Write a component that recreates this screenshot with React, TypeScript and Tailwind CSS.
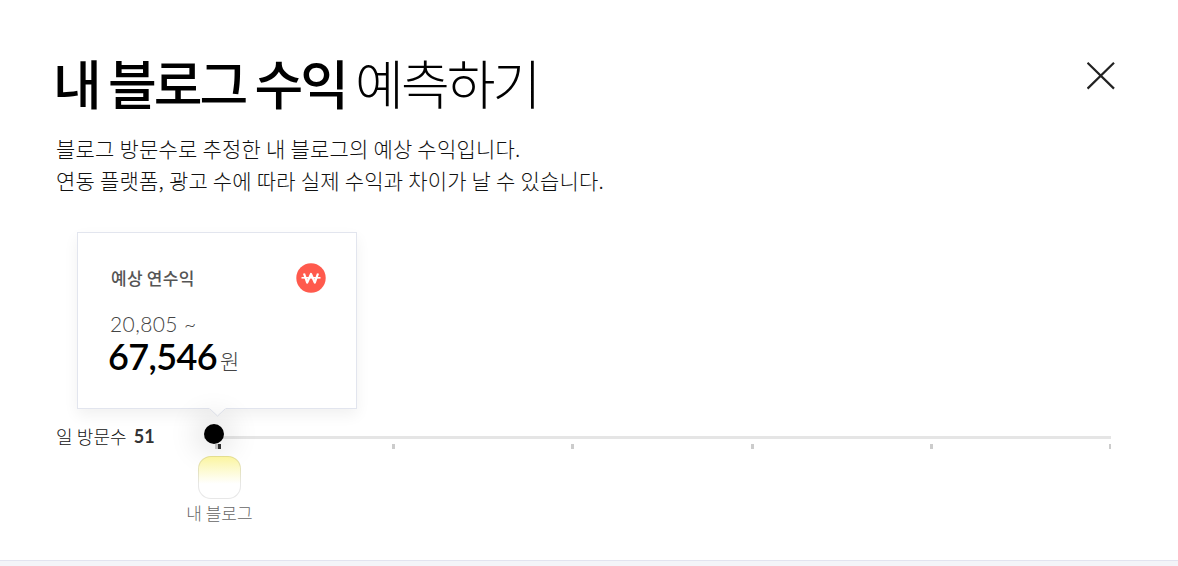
const ticks = [0, 1, 2, 3, 4, 5];

function CloseIcon() {
  return (
    <svg width="28" height="28" viewBox="0 0 28 28" fill="none" stroke="#222222" strokeWidth="2.2">
      <path d="M0.5 0.8L27 26.6M27 0.8L0.5 26.6" />
    </svg>
  );
}

function WonIcon() {
  return (
    <svg width="30" height="30" viewBox="0 0 30 30" fill="none">
      <circle cx="15" cy="15" r="14.7" fill="#FF5A4D" />
      <path
        d="M8 10.5L11.2 19.6L15 11L18.8 19.6L22 10.5"
        stroke="#FFFFFF"
        strokeWidth="2.2"
        strokeLinejoin="round"
      />
      <path d="M5.5 14.8H24.5" stroke="#FFFFFF" strokeWidth="1.6" />
    </svg>
  );
}

function RevenueCard() {
  return (
    <div className="relative h-[177px] w-[280px] border border-[#e2e5ee] bg-white pl-[33px] pr-[30px] pt-[30px] shadow-[0_6px_14px_rgba(0,0,0,0.06)]">
      <div className="flex h-[30px] items-center justify-between">
        <span className="text-[17px] font-medium tracking-[0.25px] text-[#555555]">예상 연수익</span>
        <WonIcon />
      </div>
      <div className="-ml-px mt-[18px] font-['Lato','Noto_Sans_CJK_KR',sans-serif] text-[21px] font-light leading-[26px] tracking-[0.4px] text-[#444444]">
        20,805 ~
      </div>
      <div className="-ml-[3px] flex h-[40px] items-baseline leading-[38px]">
        <strong className="font-['Lato','Noto_Sans_CJK_KR',sans-serif] text-[36px] font-semibold tracking-[-0.6px] text-black">67,546</strong>
        <span className="relative -top-px ml-[3px] text-[21px] font-light text-[#444444]">원</span>
      </div>
      <svg className="absolute left-[131px] top-[174px]" width="17" height="10" viewBox="0 0 17 10">
        <path d="M0 0H17V1.5L8.5 9L0 1.5Z" fill="#FFFFFF" />
        <path d="M0.5 1.5L8.5 9L16.5 1.5" fill="none" stroke="#e2e5ee" />
      </svg>
    </div>
  );
}

function VisitorSlider() {
  return (
    <div className="flex">
      <div className="flex h-[54px] w-[148px] items-center text-[18px] font-light tracking-[0.1px] text-[#111111]">
        일 방문수
        <b className="ml-[7px] font-['Lato','Noto_Sans_CJK_KR',sans-serif] text-[18px] font-bold text-[#333333]">51</b>
      </div>
      <div className="relative w-[907px] pt-[27px]">
        <div className="h-[3px] bg-[#e5e5e5]" />
        <div className="ml-[11px] mt-[5px] flex justify-between">
          {ticks.map((tick) => (
            <i
              key={tick}
              className="h-[5px] w-[3px] bg-[#cccccc] first:-mr-[5px] first:w-[6px] first:border-r-[3px] first:border-[#333333] last:w-[2px]"
            />
          ))}
        </div>
        <div className="absolute left-0 top-[15px] size-[20px] rounded-full bg-black shadow-[0_0_30px_8px_rgba(0,0,0,0.12)]" />
        <div className="relative -ml-[25px] mt-[7px] flex w-[80px] flex-col items-center">
          <div className="size-[43px] rounded-[13px] border border-[#00000018] bg-linear-to-b from-[#fbf49c] to-white to-65% bg-origin-border" />
          <span className="ml-px mt-[2px] text-[17px] font-light leading-[24px] text-[#666666]">내 블로그</span>
        </div>
      </div>
    </div>
  );
}

export default function App() {
  return (
    <div className="h-[566px] overflow-hidden bg-[#f3f4f8] font-['Noto_Sans_CJK_KR',sans-serif]">
      <main className="h-[561px] border-b border-[#e2e3ef] bg-white px-[56px] pt-[48px]">
        <header className="flex h-[70px] justify-between">
          <h1 className="-ml-[3px] whitespace-nowrap text-[53px] font-light leading-[68px] tracking-[-2.9px] text-black">
            <strong className="font-medium">내 블로그 수익</strong> 예측하기
          </h1>
          <button type="button" aria-label="닫기" className="mr-[7px] mt-[14px] size-[28px]">
            <CloseIcon />
          </button>
        </header>
        <p className="mt-[14px] text-[21px] font-light leading-[32px] tracking-[0.22px] text-[#111111]">
          블로그 방문수로 추정한 내 블로그의 예상 수익입니다.
          <br />
          연동 플랫폼, 광고 수에 따라 실제 수익과 차이가 날 수 있습니다.
        </p>
        <div className="ml-[21px] mt-[36px]">
          <RevenueCard />
        </div>
        <VisitorSlider />
      </main>
    </div>
  );
}
